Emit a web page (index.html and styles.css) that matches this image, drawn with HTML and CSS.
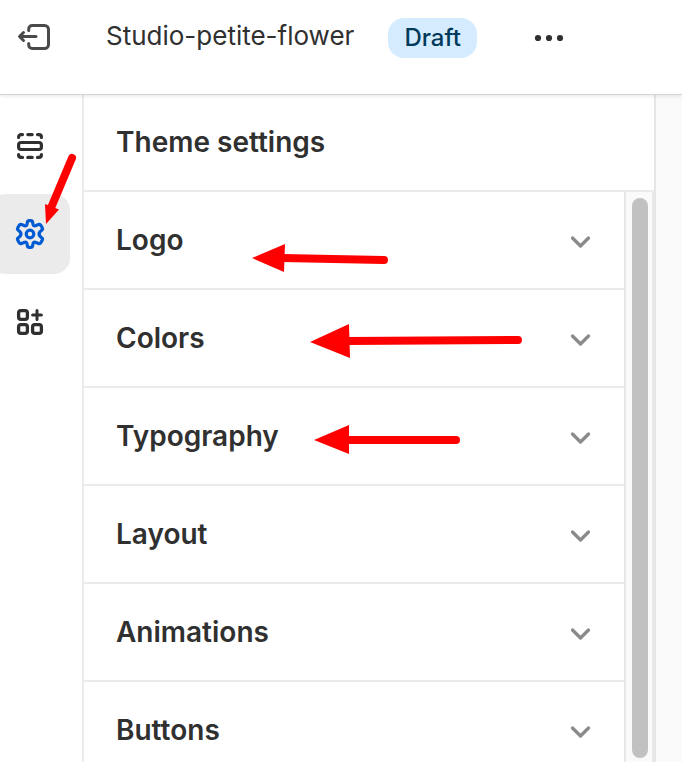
FILE: index.html
```html
<!DOCTYPE html>
<html lang="en">
<head>
<meta charset="utf-8">
<meta name="viewport" content="width=device-width, initial-scale=1">
<title>Studio-petite-flower</title>
<link rel="stylesheet" href="styles.css">
</head>
<body>
<div class="editor">
  <header class="topbar">
    <button class="icon-button exit" type="button" aria-label="Exit">
      <svg width="36" height="32" viewBox="0 0 36 32" fill="none" stroke="#4a4a4a" stroke-width="3" stroke-linecap="round" stroke-linejoin="round"><path d="M12.700 8.500V7a3.500 3.500 0 0 1 3.500-3.500h12.300a4 4 0 0 1 4 4v15a4 4 0 0 1-4 4H16.200a3.500 3.500 0 0 1-3.500-3.500V21.500M20 14.500H3.700M7.500 10.500l-4 4 4 4"/></svg>
    </button>
    <h1 class="theme-name">Studio-petite-flower</h1>
    <span class="badge">Draft</span>
    <button class="icon-button more" type="button" aria-label="More actions">
      <svg width="32" height="32" viewBox="0 0 32 32" fill="#303030"><circle cx="5" cy="16" r="3.100"/><circle cx="16" cy="16" r="3.100"/><circle cx="27" cy="16" r="3.100"/></svg>
    </button>
  </header>
  <div class="workspace">
    <nav class="rail" aria-label="Editor">
      <button class="rail-item" type="button" aria-label="Sections">
        <svg width="32" height="32" viewBox="0 0 32 32" fill="none" stroke="#303030" stroke-width="3.200" stroke-linecap="round"><rect x="4.600" y="12.500" width="22.800" height="7" rx="2.500"/><path d="M4.600 7.500V7a2.400 2.400 0 0 1 2.400-2.400h1.500M13.800 4.600h4.400M23.500 4.600H25A2.400 2.400 0 0 1 27.400 7v.5M4.600 24.500v.5A2.400 2.400 0 0 0 7 27.400h1.500M13.800 27.400h4.400M23.500 27.400H25a2.400 2.400 0 0 0 2.400-2.400v-.5"/></svg>
      </button>
      <button class="rail-item selected" type="button" aria-label="Theme settings" aria-current="page">
        <svg width="32" height="32" viewBox="0 0 32 32" fill="none" stroke="#005bd3" stroke-width="3.200" stroke-linejoin="round"><circle cx="16" cy="16" r="3.800"/><path d="M13.300 4.500Q13.600 2.600 15.300 2.600H16.700Q18.400 2.600 18.700 4.500L19 6.200Q19.400 8.200 21.300 7.700L24.500 6.500Q26 6 26.900 7.400L28.200 9.800Q29 11.200 27.700 12.200L26.100 13.600Q24 16 26.100 18.400L27.700 19.800Q29 20.800 28.200 22.200L26.900 24.600Q26 26 24.500 25.500L21.300 24.300Q19.400 23.800 19 25.800L18.700 27.500Q18.400 29.400 16.700 29.400H15.300Q13.600 29.400 13.300 27.500L13 25.800Q12.600 23.800 10.700 24.300L7.500 25.500Q6 26 5.100 24.600L3.800 22.200Q3 20.800 4.300 19.800L5.900 18.400Q8 16 5.900 13.600L4.300 12.200Q3 11.200 3.800 9.800L5.100 7.400Q6 6 7.500 6.500L10.700 7.700Q12.600 8.200 13 6.200Z"/></svg>
      </button>
      <button class="rail-item" type="button" aria-label="App embeds">
        <svg width="32" height="32" viewBox="0 0 32 32" fill="none" stroke="#303030" stroke-width="3.300" stroke-linecap="round"><rect x="4.600" y="4.600" width="8.800" height="8.800" rx="2.300"/><rect x="4.600" y="18.600" width="8.800" height="8.800" rx="2.300"/><rect x="18.600" y="18.600" width="8.800" height="8.800" rx="2.300"/><path stroke-width="3" d="M23 4.600v8.800M18.600 9h8.800"/></svg>
      </button>
    </nav>
    <main class="panel">
      <h2 class="panel-title">Theme settings</h2>
      <div class="panel-body">
        <div class="settings">
          <button class="setting" type="button" aria-expanded="false">Logo<svg class="chevron" width="24" height="24" viewBox="0 0 24 24"><path d="M4.500 10l8 8 8-8"/></svg></button>
          <button class="setting" type="button" aria-expanded="false">Colors<svg class="chevron" width="24" height="24" viewBox="0 0 24 24"><path d="M4.500 10l8 8 8-8"/></svg></button>
          <button class="setting" type="button" aria-expanded="false">Typography<svg class="chevron" width="24" height="24" viewBox="0 0 24 24"><path d="M4.500 10l8 8 8-8"/></svg></button>
          <button class="setting" type="button" aria-expanded="false">Layout<svg class="chevron" width="24" height="24" viewBox="0 0 24 24"><path d="M4.500 10l8 8 8-8"/></svg></button>
          <button class="setting" type="button" aria-expanded="false">Animations<svg class="chevron" width="24" height="24" viewBox="0 0 24 24"><path d="M4.500 10l8 8 8-8"/></svg></button>
          <button class="setting" type="button" aria-expanded="false">Buttons<svg class="chevron" width="24" height="24" viewBox="0 0 24 24"><path d="M4.500 10l8 8 8-8"/></svg></button>
        </div>
        <div class="scroll-track" aria-hidden="true"><div class="scroll-thumb"></div></div>
      </div>
    </main>
    <div class="preview"></div>
  </div>
  <svg class="annotations" width="540" height="470" viewBox="0 0 540 470" fill="#f00" stroke="#f00" stroke-width="8" stroke-linecap="round" aria-hidden="true">
    <path d="M72 158L51 208"/><path stroke="none" d="M46 224L45 204L59 209.500Z"/>
    <path d="M384 260L282 258"/><path stroke="none" d="M252 258L285 244L284 272Z"/>
    <path d="M518 340L346 341"/><path stroke="none" d="M310 342L349 324L350 358Z"/>
    <path d="M456 440L346 440"/><path stroke="none" d="M314 440L349 425V454Z"/>
  </svg>
</div>
</body>
</html>
```
FILE: styles.css
```css
* {
  box-sizing: border-box;
}

body {
  margin: 0;
  background: #fff;
  color: #303030;
  font-family: Inter, "Liberation Sans", sans-serif;
}

button {
  border: 0;
  padding: 0;
  background: none;
  color: inherit;
  font: inherit;
  cursor: pointer;
}

svg {
  display: block;
}

.editor {
  position: relative;
  display: flex;
  flex-direction: column;
  height: 100vh;
  overflow: hidden;
}

.topbar {
  position: relative;
  display: flex;
  align-items: center;
  flex: none;
  height: 95px;
  padding: 0 16px 18px;
  border-bottom: 1px solid #d4d4d4;
  background: #fff;
  box-shadow: 0 1px 4px rgba(0, 0, 0, 0.1);
}

.theme-name {
  margin: 0 34px 0 54px;
  padding-bottom: 4px;
  font-size: 26px;
  font-weight: 400;
  line-height: 40px;
}

.badge {
  padding: 0 16px;
  border-radius: 16px;
  background: #d5ebff;
  color: #003a5a;
  font-size: 24px;
  font-weight: 450;
  line-height: 40px;
}

.more {
  margin-left: 56px;
}

.workspace {
  display: flex;
  flex: 1;
  min-height: 0;
}

.rail {
  display: flex;
  flex: none;
  flex-direction: column;
  gap: 8px;
  width: 84px;
  padding-top: 11px;
  border-right: 2px solid #ebebeb;
}

.rail-item {
  display: grid;
  place-items: center;
  width: 80px;
  height: 80px;
  margin-left: -10px;
  border-radius: 16px;
}

.rail-item.selected {
  background: #ebebeb;
}

.panel {
  display: flex;
  flex: 1;
  flex-direction: column;
  min-width: 0;
  border-right: 2px solid #e6e6e6;
}

.panel-title {
  flex: none;
  margin: 0;
  padding: 27px 32px 28px;
  border-bottom: 2px solid #ebebeb;
  font-size: 28px;
  font-weight: 630;
  line-height: 40px;
}

.panel-body {
  display: flex;
  flex: 1;
  min-height: 0;
}

.settings {
  flex: 1;
  overflow: hidden;
}

.setting {
  display: flex;
  align-items: center;
  justify-content: space-between;
  width: 100%;
  height: 98px;
  padding: 0 32px;
  border-bottom: 2px solid #ebebeb;
  font-size: 28px;
  font-weight: 630;
  line-height: 40px;
}

.chevron {
  fill: none;
  stroke: #8a8a8a;
  stroke-width: 3.3;
  stroke-linecap: round;
  stroke-linejoin: round;
}

.scroll-track {
  flex: none;
  width: 30px;
  padding: 6px 4px 4px 6px;
  border: solid #e8e8e8;
  border-width: 0 2px;
  background: #fafafa;
}

.scroll-thumb {
  height: 100%;
  border-radius: 8px;
  background: #c1c1c1;
}

.preview {
  flex: none;
  width: 26px;
  background: #fafafa;
}

.annotations {
  position: absolute;
  top: 0;
  left: 0;
  pointer-events: none;
}
```
